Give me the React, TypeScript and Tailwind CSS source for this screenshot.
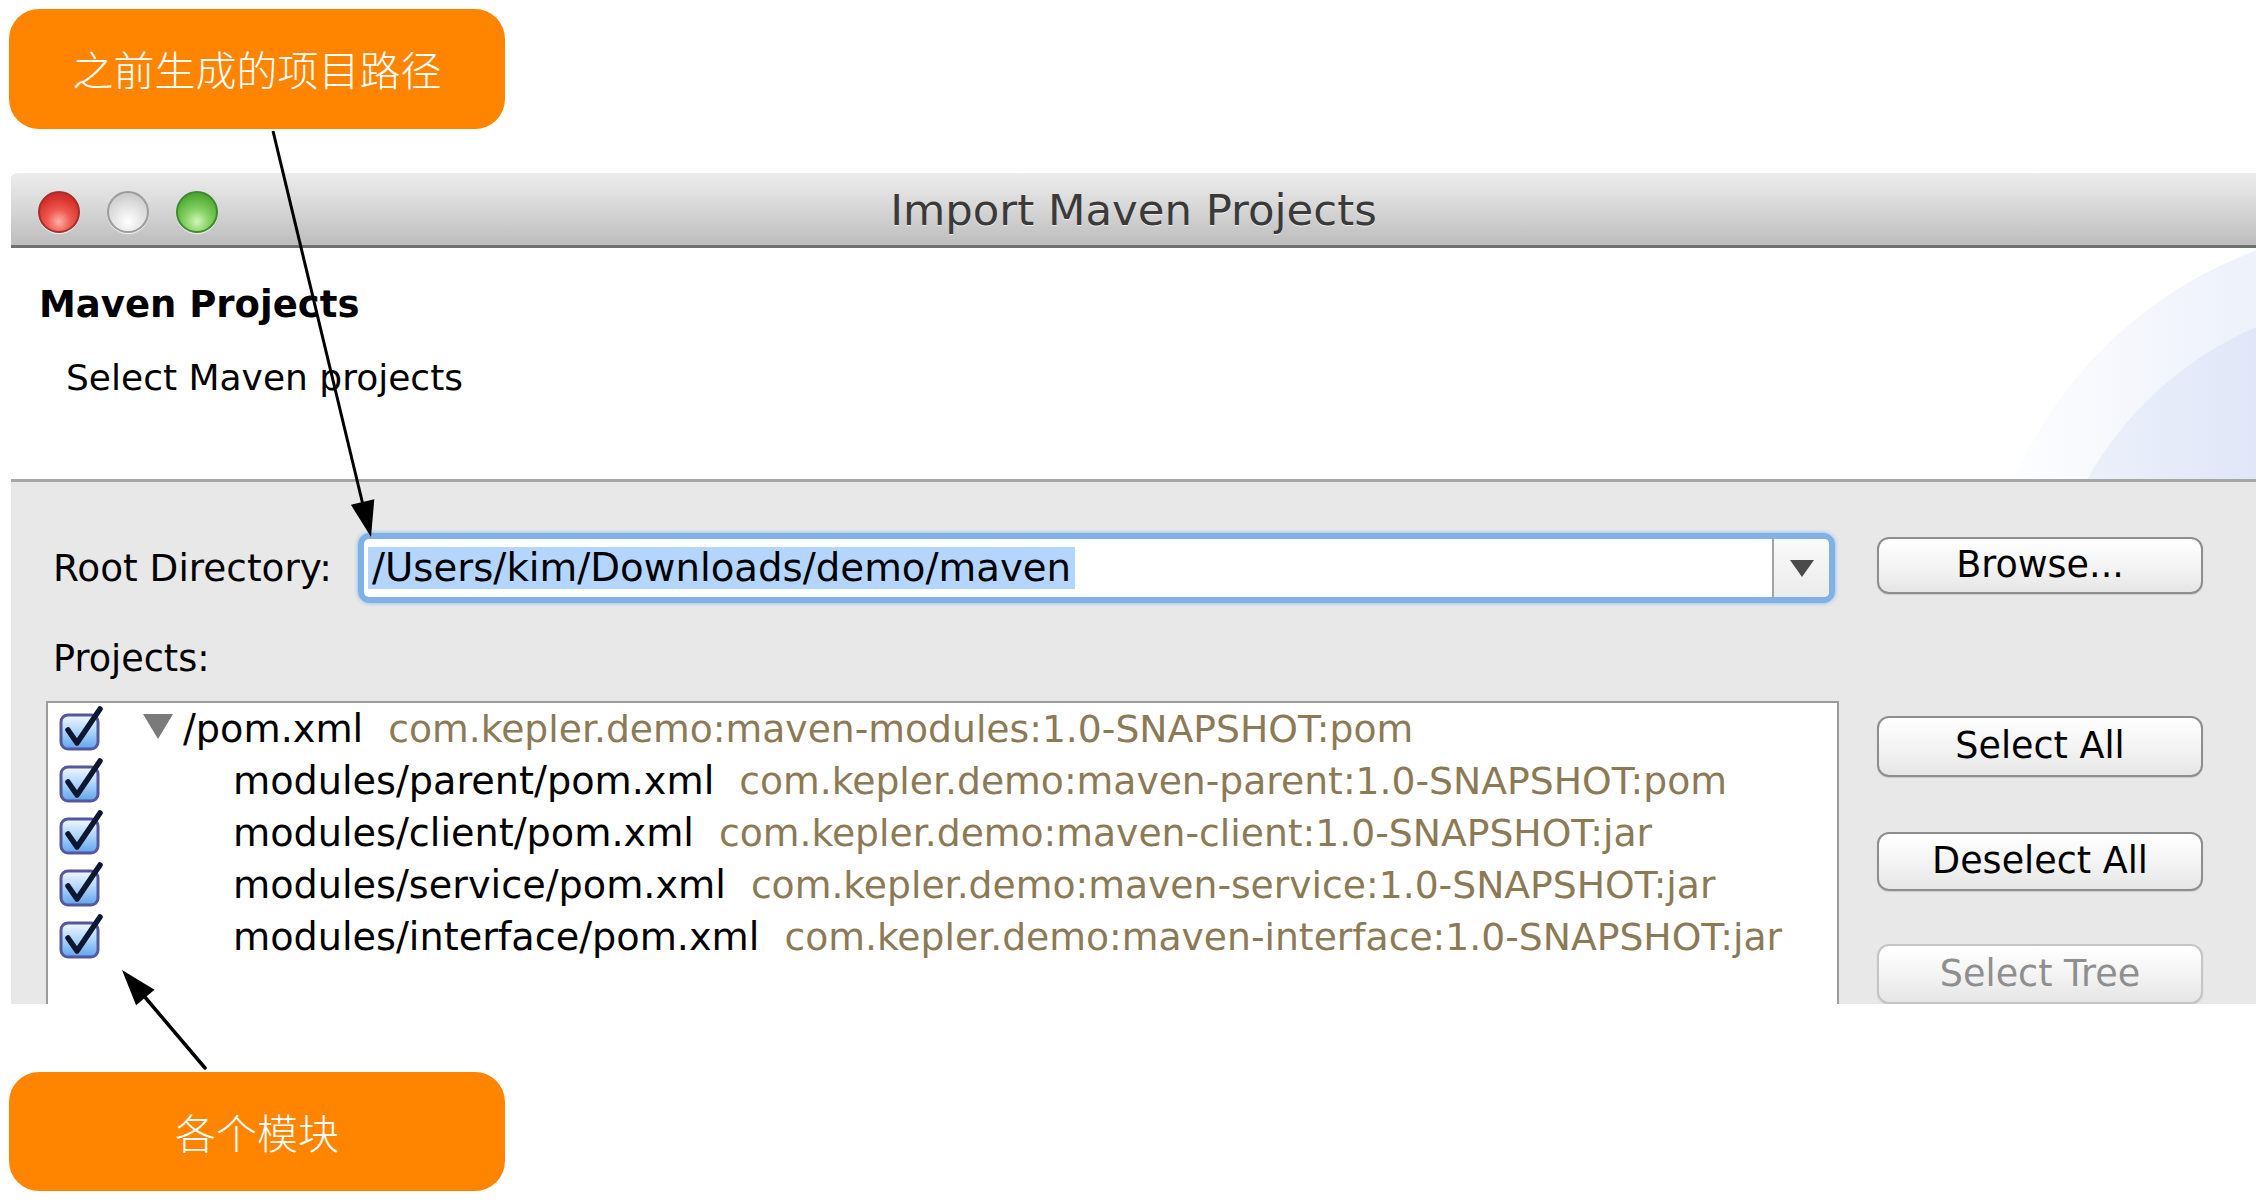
import React from "react";

function CheckBox() {
  return (
    <svg width="44" height="46" viewBox="0 0 44 46" className="overflow-visible">
      <defs>
        <linearGradient id="cbg" x1="0" y1="0" x2="0" y2="1">
          <stop offset="0" stopColor="#f2f8ff" />
          <stop offset="0.45" stopColor="#b4d8fc" />
          <stop offset="1" stopColor="#5ea4ec" />
        </linearGradient>
      </defs>
      <rect x="2" y="9" width="37" height="34" rx="7" fill="url(#cbg)" stroke="#55589c" strokeWidth="3" />
      <path d="M9 24 L18 37 L41 3" fill="none" stroke="#0d1730" strokeWidth="5.5" strokeLinecap="round" strokeLinejoin="round" />
    </svg>
  );
}

function Light({ kind }: { kind: "red" | "gray" | "green" }) {
  if (kind === "red")
    return (
      <div className="w-[42px] h-[42px] rounded-full border-2 border-[#a3302b] bg-[radial-gradient(circle_at_50%_75%,#ffb0a8_0%,#ee5850_35%,#d8332c_70%,#b8221d_100%)] shadow-[0_1px_1px_rgba(255,255,255,0.8)]" />
    );
  if (kind === "green")
    return (
      <div className="w-[42px] h-[42px] rounded-full border-2 border-[#3f8a2c] bg-[radial-gradient(circle_at_50%_75%,#d2f5b8_0%,#86d266_35%,#58b13c_70%,#3f9128_100%)] shadow-[0_1px_1px_rgba(255,255,255,0.8)]" />
    );
  return (
    <div className="w-[42px] h-[42px] rounded-full border-2 border-[#9c9c9c] bg-[radial-gradient(circle_at_50%_75%,#ffffff_0%,#e6e6e6_40%,#cfcfcf_75%,#bdbdbd_100%)] shadow-[0_1px_1px_rgba(255,255,255,0.8)]" />
  );
}

const rows = [
  { name: "/pom.xml", gav: "com.kepler.demo:maven-modules:1.0-SNAPSHOT:pom", root: true },
  { name: "modules/parent/pom.xml", gav: "com.kepler.demo:maven-parent:1.0-SNAPSHOT:pom", root: false },
  { name: "modules/client/pom.xml", gav: "com.kepler.demo:maven-client:1.0-SNAPSHOT:jar", root: false },
  { name: "modules/service/pom.xml", gav: "com.kepler.demo:maven-service:1.0-SNAPSHOT:jar", root: false },
  { name: "modules/interface/pom.xml", gav: "com.kepler.demo:maven-interface:1.0-SNAPSHOT:jar", root: false },
];

function MacButton({ label, disabled, className }: { label: string; disabled?: boolean; className: string }) {
  return (
    <div
      className={
        "w-[326px] rounded-[12px] border-2 flex items-center justify-center text-[36.5px] leading-none bg-[linear-gradient(to_bottom,#ffffff,#f4f4f4_50%,#e6e6e6)] shadow-[0_1px_1px_rgba(0,0,0,0.12)] " +
        (disabled ? "border-[#c4c4c4] text-[#8f8f8f] " : "border-[#8e8e8e] text-black ") +
        className
      }
    >
      {label}
    </div>
  );
}

export default function App() {
  return (
    <div className="relative w-[2256px] h-[1201px] bg-white overflow-hidden flex flex-col font-['DejaVu_Sans',sans-serif]">
      {/* top callout */}
      <div className="mt-[9px] ml-[9px] w-[496px] h-[120px] shrink-0 rounded-[30px] bg-[#ff8500] flex items-center justify-center text-white text-[41px] font-['Noto_Sans_CJK_SC',sans-serif] font-light">
        之前生成的项目路径
      </div>

      {/* window */}
      <div className="mt-[44px] ml-[11px] w-[2245px] h-[831px] shrink-0 flex flex-col overflow-hidden">
        {/* title bar */}
        <div className="h-[75px] shrink-0 grid grid-cols-[1fr_auto_1fr] items-center rounded-tl-[6px] border-b-[3px] border-[#6f6f6f] bg-[linear-gradient(to_bottom,#ededed,#d6d6d6_50%,#bdbdbd)]">
          <div className="flex items-center gap-[27px] pl-[27px] mt-[6px]">
            <Light kind="red" />
            <Light kind="gray" />
            <Light kind="green" />
          </div>
          <div className="text-[43.4px] leading-none text-[#3a3a3a] mt-[4px] [text-shadow:0_1px_0_rgba(255,255,255,0.7)]">
            Import Maven Projects
          </div>
          <div />
        </div>

        {/* header */}
        <div className="relative h-[231px] shrink-0 bg-white overflow-hidden pl-[28px] pt-[35px]">
          <div className="absolute left-[1967px] top-[-24px] w-[852px] h-[852px] rounded-full bg-[linear-gradient(to_right,#ffffff,#eef2fb_30%,#e6ecf9)]" />
          <div className="absolute left-[2032px] top-[51px] w-[702px] h-[702px] rounded-full bg-[linear-gradient(to_right,#eef2fb,#dbe3f6_40%,#d5def3)]" />
          <div className="relative text-[37px] leading-[43px] font-bold text-black">Maven Projects</div>
          <div className="relative mt-[30px] ml-[27px] text-[36px] leading-[43px] text-black">Select Maven projects</div>
        </div>

        {/* separator */}
        <div className="h-[3px] shrink-0 bg-[#a6a6a6]" />

        {/* body */}
        <div className="flex-1 bg-[#e8e8e8] pl-[35px] flex flex-col min-h-0">
          {/* root directory row */}
          <div className="mt-[51px] h-[70px] shrink-0 flex">
            <div className="w-[1793px] flex items-center">
              <div className="w-[312px] pl-[7px] text-[37.4px] leading-[43px] text-black">Root Directory:</div>
              <div className="w-[1477px] h-[70px] rounded-[12px] bg-[#80b1e6] p-[6px] shadow-[0_0_4px_#80b1e6]">
                <div className="h-full bg-white rounded-[5px] flex overflow-hidden">
                  <div className="flex-1 flex items-center pl-[4px]">
                    <span className="bg-[#b4d5fe] px-[4px] text-[38.7px] leading-[42px] text-black">
                      /Users/kim/Downloads/demo/maven
                    </span>
                  </div>
                  <div className="w-[57px] border-l-2 border-[#a3a3a3] flex items-center justify-center bg-[linear-gradient(to_bottom,#fafafa,#ebebeb)]">
                    <svg width="24" height="17" viewBox="0 0 24 17">
                      <polygon points="0,0 24,0 12,17" fill="#4a4a4a" />
                    </svg>
                  </div>
                </div>
              </div>
            </div>
            <div className="ml-[38px] mt-[4px]">
              <MacButton label="Browse..." className="h-[57px]" />
            </div>
          </div>

          {/* projects section */}
          <div className="flex-1 flex min-h-0">
            <div className="w-[1793px] flex flex-col">
              <div className="mt-[34px] ml-[7px] text-[36.6px] leading-[43px] text-black">Projects:</div>
              <div className="mt-[21px] flex-1 bg-white border-t-2 border-x-2 border-[#9c9c9c]">
                {rows.map((r) => (
                  <div key={r.name} className="h-[52px] flex items-center pl-[11px] whitespace-nowrap">
                    <div className="w-[42px] h-[46px] flex items-center">
                      <CheckBox />
                    </div>
                    {r.root ? (
                      <>
                        <svg width="30" height="26" viewBox="0 0 30 26" className="ml-[42px] mt-[-4px]">
                          <polygon points="0,0 30,0 15,25" fill="#7a7a7a" />
                        </svg>
                        <span className="ml-[10px] text-[38.2px] leading-[52px] text-black">{r.name}</span>
                      </>
                    ) : (
                      <span className="ml-[132px] text-[38.2px] leading-[52px] text-black">{r.name}</span>
                    )}
                    <span className="ml-[25px] text-[37.7px] leading-[52px] text-[#8b7a55]">{r.gav}</span>
                  </div>
                ))}
              </div>
            </div>
            <div className="ml-[38px] pt-[113px] flex flex-col">
              <MacButton label="Select All" className="h-[61px]" />
              <MacButton label="Deselect All" className="h-[60px] mt-[55px]" />
              <MacButton label="Select Tree" disabled className="h-[60px] mt-[53px]" />
            </div>
          </div>
        </div>
      </div>

      {/* bottom callout */}
      <div className="mt-[68px] ml-[9px] w-[496px] h-[119px] shrink-0 rounded-[30px] bg-[#ff8500] flex items-center justify-center text-white text-[41px] font-['Noto_Sans_CJK_SC',sans-serif] font-light">
        各个模块
      </div>

      {/* annotation arrows */}
      <svg className="absolute inset-0 pointer-events-none" width="2256" height="1201" viewBox="0 0 2256 1201">
        <line x1="273" y1="131" x2="363" y2="505" stroke="#000" strokeWidth="3" />
        <polygon points="371,537 374.3,499.2 350.9,504.8" fill="#000" />
        <line x1="205" y1="1068" x2="144" y2="996" stroke="#000" strokeWidth="3.5" strokeLinecap="round" />
        <polygon points="122,970 154.5,989.7 136.1,1005.3" fill="#000" />
      </svg>
    </div>
  );
}
